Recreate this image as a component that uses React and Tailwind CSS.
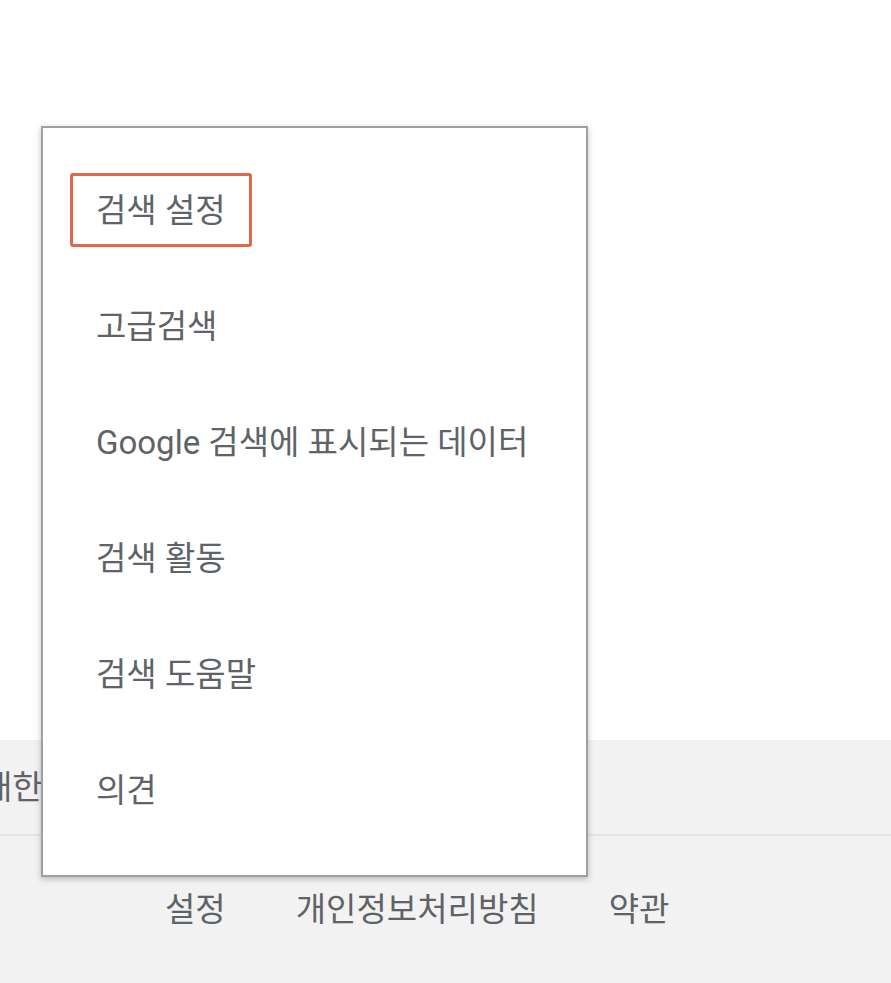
const font = { fontFamily: '"Roboto", "Noto Sans CJK KR", sans-serif' };

const items = ["검색 설정", "고급검색", "Google 검색에 표시되는 데이터", "검색 활동", "검색 도움말", "의견"];

const App = () => {
  return (
    <div className="relative w-[891px] h-[983px] overflow-hidden bg-white text-[#5f6368]" style={font}>
      <div className="h-[740px] bg-white" />
      <div className="h-[243px] bg-[#f2f2f2]">
        <div className="h-[96px] flex items-center border-b-2 border-[#e4e4e4]">
          <span className="-ml-[18px] text-[33px] leading-none">대한민국</span>
        </div>
        <div className="h-[147px] flex items-start pt-[57px] pl-[165px] gap-[70px] text-[33px] leading-none">
          <span>설정</span>
          <span>개인정보처리방침</span>
          <span>약관</span>
        </div>
      </div>

      <div className="absolute left-[41px] top-[126px] w-[547px] h-[751px] bg-white border-2 border-[#a0a0a0] shadow-[0_2px_6px_rgba(0,0,0,0.25)] pt-[24px] pl-[53px]">
        {items.map((label, i) => (
          <div key={label} className="h-[116px] flex items-center text-[33px] leading-none">
            {i === 0 ? (
              <span className="inline-flex items-center h-[74px] -ml-[26px] px-[23px] border-[3px] border-[#e0674c] rounded-[3px]">
                {label}
              </span>
            ) : (
              <span>{label}</span>
            )}
          </div>
        ))}
      </div>
    </div>
  );
};

export default App;
